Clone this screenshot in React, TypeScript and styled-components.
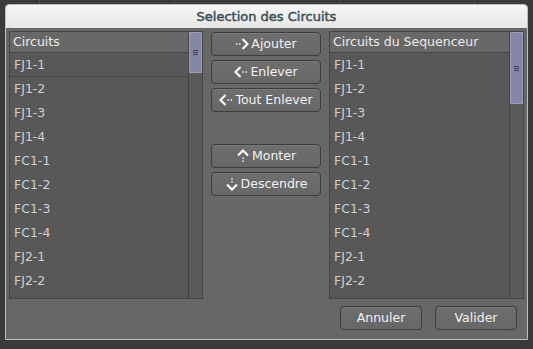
import React from "react";
import styled, { createGlobalStyle } from "styled-components";

const Global = createGlobalStyle`
  html, body { margin: 0; padding: 0; background: #3b3b3b; }
  body { width: 533px; height: 349px; overflow: hidden; font-family: "DejaVu Sans", sans-serif; }
`;

const Page = styled.div`
  width: 533px;
  height: 349px;
  box-sizing: border-box;
  padding: 4px 5px 9px 5px;
  display: flex;
  background:
    linear-gradient(90deg, transparent 39px, #4a4a4a 39px, #4a4a4a 40px, transparent 40px) 0 0 / 100% 4px no-repeat,
    linear-gradient(90deg, transparent 174px, #4a4a4a 174px, #4a4a4a 175px, transparent 175px) 0 0 / 100% 4px no-repeat,
    linear-gradient(90deg, transparent 339px, #4a4a4a 339px, #4a4a4a 340px, transparent 340px) 0 0 / 100% 4px no-repeat,
    linear-gradient(90deg, transparent 474px, #4a4a4a 474px, #4a4a4a 475px, transparent 475px) 0 0 / 100% 4px no-repeat,
    #3b3b3b;
`;

const Window = styled.div`
  flex: 1;
  display: flex;
  flex-direction: column;
  border: 1px solid #bdbdbd;
  border-radius: 4px 4px 0 0;
  overflow: hidden;
  background: #676767;
`;

const TitleBar = styled.div`
  height: 23px;
  display: flex;
  align-items: center;
  justify-content: center;
  background: linear-gradient(#f6f6f6, #e6e6e6);
  color: #3e4f57;
  font-size: 13px;
  -webkit-text-stroke: 0.5px #3e4f57;
`;

const Body = styled.div`
  flex: 1;
  display: flex;
  flex-direction: column;
  padding: 3px 3px 9px 3px;
  gap: 7px;
`;

const Columns = styled.div`
  display: grid;
  grid-template-columns: 194px 110px 195px;
  column-gap: 8px;
  height: 268px;
`;

const ListBox = styled.div`
  display: flex;
  border: 1px solid #454545;
  background: #585858;
  overflow: hidden;
`;

const ListMain = styled.div`
  flex: 1;
  display: flex;
  flex-direction: column;
`;

const Header = styled.div`
  height: 21px;
  box-sizing: border-box;
  display: flex;
  align-items: center;
  padding: 0 0 2px 3px;
  background: #686868;
  border-bottom: 1px solid #474747;
  color: #ececec;
  font-size: 12.5px;
`;

const Row = styled.div<{ $line?: boolean }>`
  height: 24px;
  box-sizing: border-box;
  display: flex;
  align-items: center;
  padding: 0 0 0 4px;
  color: #d0d0d0;
  font-size: 12.5px;
  border-bottom: 1px solid ${(p) => (p.$line ? "#4a4a4a" : "transparent")};
`;

const Scroll = styled.div`
  width: 13px;
  border-left: 1px solid #454545;
  background: #5a5a5a;
  display: flex;
  flex-direction: column;
`;

const Thumb = styled.div<{ $h: number }>`
  height: ${(p) => p.$h}px;
  box-sizing: border-box;
  background: #8686a6;
  border: 1px solid #9c9cba;
  display: flex;
  flex-direction: column;
  align-items: center;
  justify-content: center;
  gap: 1px;
`;

const Grip = styled.span`
  display: block;
  width: 5px;
  height: 1px;
  background: #3c3c50;
`;

const ButtonCol = styled.div`
  display: flex;
  flex-direction: column;
  padding-top: 1px;
  gap: 4px;
`;

const Spacer = styled.div`
  height: 24px;
`;

const Btn = styled.button<{ $w?: number }>`
  height: 24px;
  width: ${(p) => (p.$w ? `${p.$w}px` : "100%")};
  box-sizing: border-box;
  display: flex;
  align-items: center;
  justify-content: center;
  gap: 2px;
  background: linear-gradient(#6e6e6e, #676767);
  border: 1px solid #3d3d3d;
  border-radius: 4px;
  box-shadow: inset 0 1px 0 rgba(255, 255, 255, 0.08);
  color: #f2f2f2;
  font-family: "DejaVu Sans", sans-serif;
  font-size: 12.5px;
  padding: 0 0 1px 0;
`;

const Footer = styled.div`
  display: flex;
  justify-content: flex-end;
  gap: 13px;
  padding-right: 7px;
`;

type Dir = "right" | "left" | "up" | "down";

const Arrow = ({ dir }: { dir: Dir }) => {
  const c = "#f4f4f4";
  if (dir === "right")
    return (
      <svg width="14" height="14" viewBox="0 0 14 14">
        <rect x="1" y="6.25" width="1.5" height="1.5" fill={c} />
        <rect x="4" y="6.25" width="1.5" height="1.5" fill={c} />
        <path d="M7.5 2 L12.5 7 L7.5 12" fill="none" stroke={c} strokeWidth="2.2" />
      </svg>
    );
  if (dir === "left")
    return (
      <svg width="14" height="14" viewBox="0 0 14 14">
        <path d="M6.5 2 L1.5 7 L6.5 12" fill="none" stroke={c} strokeWidth="2.2" />
        <rect x="8.5" y="6.25" width="1.5" height="1.5" fill={c} />
        <rect x="11.5" y="6.25" width="1.5" height="1.5" fill={c} />
      </svg>
    );
  if (dir === "up")
    return (
      <svg width="14" height="14" viewBox="0 0 14 14">
        <path d="M2 6.5 L7 1.5 L12 6.5" fill="none" stroke={c} strokeWidth="2.2" />
        <rect x="6.25" y="8.5" width="1.5" height="1.5" fill={c} />
        <rect x="6.25" y="11.5" width="1.5" height="1.5" fill={c} />
      </svg>
    );
  return (
    <svg width="14" height="14" viewBox="0 0 14 14">
      <rect x="6.25" y="1" width="1.5" height="1.5" fill={c} />
      <rect x="6.25" y="4" width="1.5" height="1.5" fill={c} />
      <path d="M2 7.5 L7 12.5 L12 7.5" fill="none" stroke={c} strokeWidth="2.2" />
    </svg>
  );
};

const items = ["FJ1-1", "FJ1-2", "FJ1-3", "FJ1-4", "FC1-1", "FC1-2", "FC1-3", "FC1-4", "FJ2-1", "FJ2-2"];

const List = ({ title, thumb, line }: { title: string; thumb: number; line?: boolean }) => (
  <ListBox>
    <ListMain>
      <Header>{title}</Header>
      {items.map((it, i) => (
        <Row key={it} $line={line && i === 0}>
          {it}
        </Row>
      ))}
    </ListMain>
    <Scroll>
      <Thumb $h={thumb}>
        <Grip />
        <Grip />
        <Grip />
      </Thumb>
    </Scroll>
  </ListBox>
);

export default function App() {
  return (
    <>
      <Global />
      <Page>
        <Window>
          <TitleBar>Selection des Circuits</TitleBar>
          <Body>
            <Columns>
              <List title="Circuits" thumb={41} line />
              <ButtonCol>
                <Btn>
                  <Arrow dir="right" />
                  Ajouter
                </Btn>
                <Btn>
                  <Arrow dir="left" />
                  Enlever
                </Btn>
                <Btn>
                  <Arrow dir="left" />
                  Tout Enlever
                </Btn>
                <Spacer />
                <Btn>
                  <Arrow dir="up" />
                  Monter
                </Btn>
                <Btn>
                  <Arrow dir="down" />
                  Descendre
                </Btn>
              </ButtonCol>
              <List title="Circuits du Sequenceur" thumb={72} />
            </Columns>
            <Footer>
              <Btn $w={82}>Annuler</Btn>
              <Btn $w={82}>Valider</Btn>
            </Footer>
          </Body>
        </Window>
      </Page>
    </>
  );
}
